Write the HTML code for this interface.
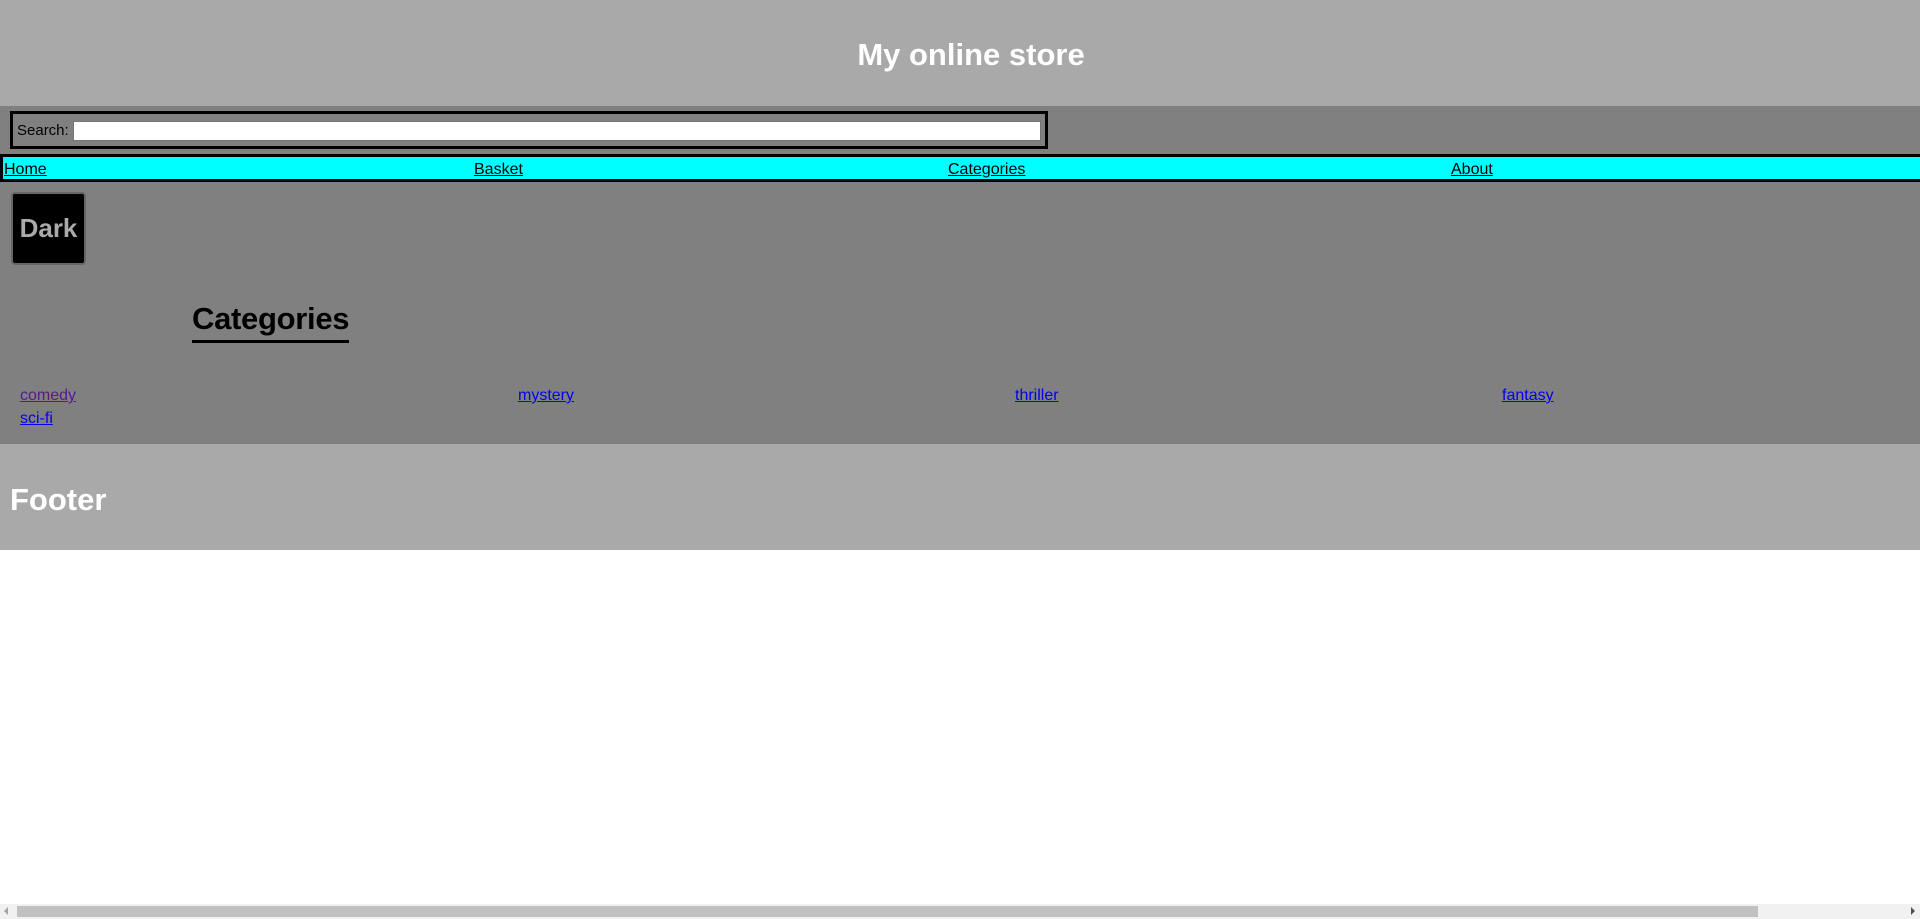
<!DOCTYPE html>
<html><head><meta charset="utf-8"><style>
*{margin:0;padding:0;box-sizing:border-box}
body{width:1920px;height:919px;overflow:hidden;position:relative;background:#fff;font-family:"Liberation Sans",sans-serif}
.abs{position:absolute}
a{color:#00e;text-decoration:underline}
</style></head><body>
<div class="abs" style="left:0;top:0;width:1920px;height:106px;background:#a9a9a9"></div>
<div class="abs" style="left:0;top:36px;width:1942px;text-align:center;color:#fff;font-weight:bold;font-size:31px;line-height:38px">My online store</div>
<div class="abs" style="left:0;top:106px;width:1920px;height:48px;background:#808080"></div>
<div class="abs" style="left:10px;top:111px;width:1038px;height:38px;border:3px solid #000"></div>
<div class="abs" style="left:17px;top:121px;font-size:15px;line-height:20px;color:#000">Search:</div>
<div class="abs" style="left:73px;top:121px;width:968px;height:20px;background:#fff;border:1px solid #767676"></div>
<div class="abs" style="left:0;top:154px;width:1940px;height:28px;background:#0ff;border:3px solid #000"></div>
<div class="abs" style="left:4px;top:160px;font-size:16px;line-height:20px"><a style="color:#000">Home</a></div>
<div class="abs" style="left:474px;top:160px;font-size:16px;line-height:20px"><a style="color:#000">Basket</a></div>
<div class="abs" style="left:948px;top:160px;font-size:16px;line-height:20px"><a style="color:#000">Categories</a></div>
<div class="abs" style="left:1451px;top:160px;font-size:16px;line-height:20px"><a style="color:#000">About</a></div>
<div class="abs" style="left:0;top:182px;width:1920px;height:262px;background:#808080"></div>
<div class="abs" style="left:11px;top:192px;width:75px;height:73px;background:#000;border:2px solid #666;border-radius:4px;color:#aaa;font-weight:bold;font-size:26px;line-height:69px;text-align:center">Dark</div>
<div class="abs" style="left:192px;top:300px;font-size:31px;font-weight:bold;line-height:38px;color:#000;border-bottom:3px solid #000;padding-bottom:2px;letter-spacing:-0.3px">Categories</div>
<div class="abs" style="left:20px;top:386px;font-size:16px;line-height:20px"><a style="color:#551a8b">comedy</a></div>
<div class="abs" style="left:518px;top:386px;font-size:16px;line-height:20px"><a>mystery</a></div>
<div class="abs" style="left:1015px;top:386px;font-size:16px;line-height:20px"><a>thriller</a></div>
<div class="abs" style="left:1502px;top:386px;font-size:16px;line-height:20px"><a>fantasy</a></div>
<div class="abs" style="left:20px;top:409px;font-size:16px;line-height:20px"><a>sci-fi</a></div>
<div class="abs" style="left:0;top:444px;width:1920px;height:106px;background:#a9a9a9"></div>
<div class="abs" style="left:10px;top:481px;color:#fff;font-weight:bold;font-size:31px;line-height:38px">Footer</div>
<div class="abs" style="left:0;top:904px;width:1920px;height:15px;background:#f1f1f1"></div>
<div class="abs" style="left:17px;top:906px;width:1741px;height:11px;background:#c1c1c1"></div>
<div class="abs" style="left:4px;top:907px;width:0;height:0;border-top:4px solid transparent;border-bottom:4px solid transparent;border-right:4px solid #a3a3a3"></div>
<div class="abs" style="left:1911px;top:907px;width:0;height:0;border-top:4px solid transparent;border-bottom:4px solid transparent;border-left:4px solid #505050"></div>
</body></html>
